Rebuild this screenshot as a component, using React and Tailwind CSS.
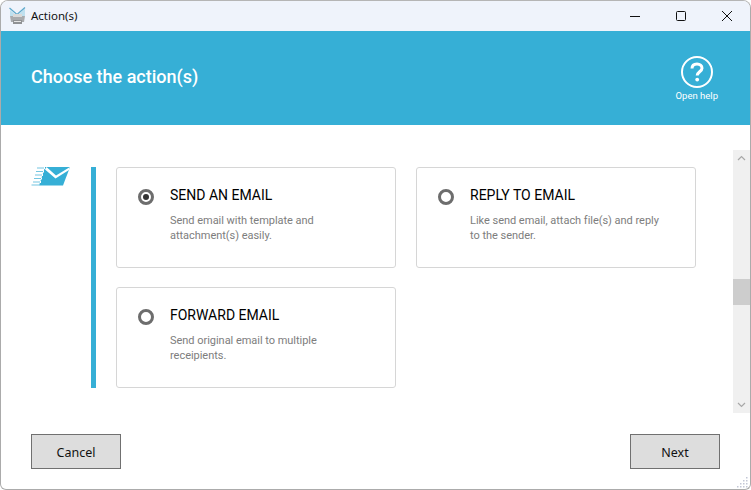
import { useState } from 'react';

const actions = [
  { id: 'send', title: 'SEND AN EMAIL', lines: ['Send email with template and', 'attachment(s) easily.'] },
  { id: 'reply', title: 'REPLY TO EMAIL', lines: ['Like send email, attach file(s) and reply', 'to the sender.'] },
  { id: 'forward', title: 'FORWARD EMAIL', lines: ['Send original email to multiple', 'receipients.'] },
];

const AppIcon = () => (
  <svg width="17" height="18" viewBox="0 0 17 18" className="shrink-0">
    <path d="M1 3 L8 9 L16 1 L16 9 L1 9 Z" fill="#bfe0ef" />
    <path d="M0.5 1 L8 7.5 L16 0.5" fill="none" stroke="#5fa9cc" strokeWidth="1.3" />
    <path d="M1 9 H16 L15 15 H2 Z" fill="#a9abae" />
    <rect x="4" y="7" width="9" height="3" fill="#d9d9d9" />
    <rect x="4" y="13" width="9" height="4" fill="#8f9194" />
    <rect x="5" y="14" width="7" height="1" fill="#e4e4e4" />
  </svg>
);

const EnvelopeIcon = () => (
  <svg width="40" height="19" viewBox="0 0 40 19" className="shrink-0">
    <path d="M14 0 L39 0 L32 18.5 L8 18.5 Z" fill="#36afd6" />
    <path d="M15.5 0 L25 8.5 L39 0 L38 3 L24.5 11.5 L14 2.5 Z" fill="#ffffff" />
    <path d="M6 1 H14 M5 4.5 H13 M4 8 H12 M3 11.5 H11 M2 15 H10 M0.5 18 H8" stroke="#ffffff" strokeWidth="1.8" fill="none" />
    <path d="M6 1 H13 M5 4.5 H12 M4 8 H11 M3 11.5 H10 M2 15 H9 M0.5 18 H8" stroke="#74c6e1" strokeWidth="1.2" fill="none" />
  </svg>
);

const Radio = ({ checked }) => (
  <span className="w-4 h-4 rounded-full border-[3px] border-[#6d6d6d] flex items-center justify-center shrink-0">
    {checked && <span className="w-1.5 h-1.5 rounded-full bg-[#333333]" />}
  </span>
);

const ActionCard = ({ action, checked, onSelect }) => (
  <div
    onClick={onSelect}
    className="h-[101px] rounded-[3px] border border-[#d6d6d6] bg-white pl-[21px] pt-[19px] flex gap-4 cursor-pointer"
  >
    <div className="pt-[2px]">
      <Radio checked={checked} />
    </div>
    <div>
      <div className="text-[14px] leading-[16px] text-black">{action.title}</div>
      <div className="mt-[10px] text-[11px] leading-[15px] tracking-[-0.03px] text-[#7d7d7d]">
        {action.lines.map((line) => (
          <div key={line}>{line}</div>
        ))}
      </div>
    </div>
  </div>
);

const FooterButton = ({ children }) => (
  <button className="w-[90px] h-[35px] pt-[3px] border border-[#707070] bg-[#dddddd] text-[12.5px] text-[#111111] font-['Noto_Sans',sans-serif]">
    {children}
  </button>
);

export default function App() {
  const [selected, setSelected] = useState('send');

  return (
    <div className="relative w-[751px] h-[490px] flex flex-col overflow-hidden rounded-t-[8px] rounded-b-[6px] border border-[#ababab] border-t-[#b5b5b5] bg-white font-['Roboto',sans-serif]">
      {/* Title bar */}
      <div className="h-[30px] flex items-center bg-[#eff3fb] shrink-0">
        <div className="ml-[8px] flex items-center gap-[5px]">
          <AppIcon />
          <span className="text-[11.5px] text-[#111111] font-['Noto_Sans',sans-serif]">Action(s)</span>
        </div>
        <div className="ml-auto flex items-center">
          <svg width="46" height="30" viewBox="0 0 46 30">
            <path d="M18 15.5 H28" stroke="#111111" strokeWidth="1" />
          </svg>
          <svg width="46" height="30" viewBox="0 0 46 30">
            <rect x="18.5" y="10.5" width="9" height="9" rx="1" fill="none" stroke="#111111" strokeWidth="1" />
          </svg>
          <svg width="46" height="30" viewBox="0 0 46 30">
            <path d="M18 10 L28 20 M28 10 L18 20" stroke="#111111" strokeWidth="1" />
          </svg>
        </div>
      </div>

      {/* Header */}
      <div className="h-[94px] bg-[#36afd6] flex items-center justify-between pl-[30px] pr-[32px] shrink-0">
        <h1 className="pb-[3px] text-[18px] font-medium text-white">Choose the action(s)</h1>
        <div className="pt-[1px] flex flex-col items-center text-white">
          <svg width="32" height="32" viewBox="0 0 32 32">
            <circle cx="16" cy="16" r="15" fill="none" stroke="#ffffff" strokeWidth="2" />
            <path d="M11 12.5 C11 9.5 13.2 8 16 8 C19 8 21 9.7 21 12.2 C21 15.6 16.2 16 16.2 19.5" fill="none" stroke="#ffffff" strokeWidth="3" />
            <circle cx="16.2" cy="23.6" r="1.9" fill="#ffffff" />
          </svg>
          <span className="mt-[2px] text-[9.5px] leading-[12px]">Open help</span>
        </div>
      </div>

      {/* Body */}
      <div className="flex-1 flex min-h-0">
        <div className="flex-1 pl-[30px] pt-[42px] flex items-start">
          <div className="w-[60px]">
            <EnvelopeIcon />
          </div>
          <div className="w-[5px] h-[221px] bg-[#36afd6]" />
          <div className="ml-[20px] w-[580px] grid grid-cols-2 gap-x-[20px] gap-y-[19px]">
            {actions.map((action) => (
              <ActionCard
                key={action.id}
                action={action}
                checked={selected === action.id}
                onSelect={() => setSelected(action.id)}
              />
            ))}
          </div>
        </div>

        {/* Scrollbar */}
        <div className="w-[17px] h-[263px] mt-[25px] bg-[#f0f0f0] flex flex-col items-center shrink-0">
          <svg width="17" height="17" viewBox="0 0 17 17" className="shrink-0">
            <path d="M5 10 L8.5 6.5 L12 10" fill="none" stroke="#a8a8a8" strokeWidth="1.2" />
          </svg>
          <div className="w-full h-[26px] mt-[112px] bg-[#cdcdcd] shrink-0" />
          <svg width="17" height="17" viewBox="0 0 17 17" className="mt-auto shrink-0">
            <path d="M5 7 L8.5 10.5 L12 7" fill="none" stroke="#a8a8a8" strokeWidth="1.2" />
          </svg>
        </div>
      </div>

      {/* Footer */}
      <div className="h-[75px] flex justify-between pl-[30px] pr-[30px] pt-[20px] shrink-0">
        <FooterButton>Cancel</FooterButton>
        <FooterButton>Next</FooterButton>
      </div>

      {/* Resize grip */}
      <svg width="12" height="12" viewBox="0 0 12 12" className="absolute right-[1px] bottom-[1px]" fill="#c3c7d6">
        <rect x="9" y="1" width="1.5" height="1.5" />
        <rect x="6" y="4" width="1.5" height="1.5" />
        <rect x="9" y="4" width="1.5" height="1.5" />
        <rect x="3" y="7" width="1.5" height="1.5" />
        <rect x="6" y="7" width="1.5" height="1.5" />
        <rect x="9" y="7" width="1.5" height="1.5" />
        <rect x="0" y="10" width="1.5" height="1.5" />
        <rect x="3" y="10" width="1.5" height="1.5" />
        <rect x="6" y="10" width="1.5" height="1.5" />
        <rect x="9" y="10" width="1.5" height="1.5" />
      </svg>
    </div>
  );
}
